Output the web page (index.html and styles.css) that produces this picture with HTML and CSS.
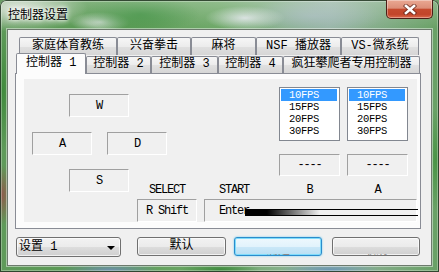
FILE: index.html
```html
<!DOCTYPE html>
<html lang="zh-CN">
<head>
    <meta charset="UTF-8">
    <meta name="viewport" content="width=device-width, initial-scale=1.0">
    <title>控制器设置</title>
    <link rel="stylesheet" href="styles.css">
</head>
<body>
    <div class="window">
        <div class="titlebar">
            <span class="title">控制器设置</span>
            <button class="close-btn" aria-label="关闭">
                <svg width="14" height="11" viewBox="0 0 14 11">
                    <path d="M3 2 L11 9 M11 2 L3 9" stroke="#5b2419" stroke-width="4.4" stroke-linecap="square" fill="none" opacity="0.7"/>
                    <path d="M3 2 L11 9 M11 2 L3 9" stroke="#fff" stroke-width="2.6" stroke-linecap="square" fill="none"/>
                </svg>
            </button>
        </div>

        <div class="client">
            <div class="tabctl">
                <div class="tabrow back">
                    <div class="tab" style="width: 98px">家庭体育教练</div>
                    <div class="tab" style="width: 74px">兴奋拳击</div>
                    <div class="tab" style="width: 65px">麻将</div>
                    <div class="tab" style="width: 85px">NSF 播放器</div>
                    <div class="tab" style="width: 78px">VS-微系统</div>
                </div>
                <div class="tabrow front">
                    <div class="tab active" style="width: 70px">控制器 1</div>
                    <div class="tab" style="width: 65px">控制器 2</div>
                    <div class="tab" style="width: 67px">控制器 3</div>
                    <div class="tab" style="width: 65px">控制器 4</div>
                    <div class="tab" style="width: 137px">疯狂攀爬者专用控制器</div>
                </div>

                <div class="panel">
                    <div class="page">
                        <div class="keypad">
                            <div class="field key-w">W</div>
                            <div class="keyrow">
                                <div class="field">A</div>
                                <div class="field">D</div>
                            </div>
                            <div class="field key-s">S</div>
                        </div>

                        <ul class="fps fps-1">
                            <li class="sel">10FPS</li>
                            <li>15FPS</li>
                            <li>20FPS</li>
                            <li>30FPS</li>
                        </ul>
                        <ul class="fps fps-2">
                            <li class="sel">10FPS</li>
                            <li>15FPS</li>
                            <li>20FPS</li>
                            <li>30FPS</li>
                        </ul>
                        <div class="field dash dash-1">----</div>
                        <div class="field dash dash-2">----</div>

                        <div class="label lbl-select">SELECT</div>
                        <div class="label lbl-start">START</div>
                        <div class="label lbl-b">B</div>
                        <div class="label lbl-a">A</div>

                        <div class="field bind bind-select">R Shift</div>
                        <div class="field bind bind-start"><span class="bind-text">Enter</span></div>
                    </div>
                </div>
            </div>

            <div class="buttons">
                <div class="combo">
                    <span>设置 1</span>
                    <span class="arrow"></span>
                </div>
                <button class="btn btn-reset">默认</button>
                <button class="btn btn-default"><span class="ghost">确定</span></button>
                <button class="btn btn-cancel"><span class="ghost">取消</span></button>
            </div>
        </div>
    </div>
</body>
</html>
```

FILE: styles.css
```css
* {
    box-sizing: border-box;
}

html, body {
    margin: 0;
    padding: 0;
    width: 439px;
    height: 272px;
    overflow: hidden;
    font-family: "Noto Sans CJK SC", sans-serif;
    font-size: 12px;
    color: #000;
    background: #6a9c66;
}

/* glass frame */
.window {
    width: 439px;
    height: 272px;
    display: flex;
    flex-direction: column;
    padding: 0 7px 6px 7px;
    border-radius: 6px 6px 0 0;
    background:
        linear-gradient(to bottom, rgba(255, 255, 255, 0.25), rgba(255, 255, 255, 0) 28px),
        radial-gradient(70px 24px at 18px 8px, #d4ddd0 0%, rgba(212, 221, 208, 0) 100%),
        radial-gradient(60px 18px at 140px 14px, #3f9040 0%, rgba(63, 144, 64, 0) 100%),
        radial-gradient(30px 10px at 100px 22px, #cfdcd2 0%, rgba(207, 220, 210, 0) 100%),
        radial-gradient(40px 12px at 245px 18px, #d6e0de 0%, rgba(214, 224, 222, 0) 100%),
        radial-gradient(70px 18px at 315px 16px, #9fb8b4 0%, rgba(159, 184, 180, 0) 100%),
        radial-gradient(14px 60px at 2px 90px, #3f8a3c 0%, rgba(63, 138, 60, 0) 100%),
        radial-gradient(12px 30px at 2px 195px, #8e5c4c 0%, rgba(142, 92, 76, 0) 100%),
        radial-gradient(12px 50px at 436px 160px, #4a9446 0%, rgba(74, 148, 70, 0) 100%),
        radial-gradient(50px 8px at 110px 270px, #6d8fa8 0%, rgba(109, 143, 168, 0) 100%),
        radial-gradient(40px 8px at 220px 270px, #3e8a3e 0%, rgba(62, 138, 62, 0) 100%),
        radial-gradient(50px 8px at 330px 270px, #6b96b0 0%, rgba(107, 150, 176, 0) 100%),
        linear-gradient(to right, #5f9a5a 0%, #5a9a54 20%, #6ea868 50%, #98b6a4 75%, #68a064 100%);
    box-shadow: inset 0 0 0 1px rgba(30, 50, 30, 0.85), inset 0 0 0 2px rgba(255, 255, 255, 0.3);
}

.titlebar {
    flex: none;
    height: 29px;
    display: flex;
    align-items: flex-start;
    justify-content: space-between;
}

.title {
    margin: 7px 0 0 1px;
    line-height: 14px;
    text-shadow: 0 0 5px #fff, 0 0 3px #fff, 0 0 8px rgba(255, 255, 255, 0.8);
}

.close-btn {
    width: 47px;
    height: 19px;
    margin-right: -1px;
    padding: 0;
    border: 1px solid #4c1e16;
    border-top: none;
    border-radius: 0 0 5px 5px;
    background: linear-gradient(#eaa893 0%, #dc8e78 45%, #c54a2e 52%, #c2452a 80%, #dc6a4c 100%);
    box-shadow: inset 0 0 0 1px rgba(255, 255, 255, 0.35);
    display: flex;
    align-items: center;
    justify-content: center;
}

.client {
    flex: 1;
    background: #f0f0f0;
    border: 1px solid #6d7a6d;
    box-shadow: 0 0 0 1px rgba(255, 255, 255, 0.45);
}

/* tab control */
.tabctl {
    width: 406px;
    margin: 7px 0 0 7px;
}

.tabrow {
    display: flex;
}

.tabrow.back {
    height: 18px;
    padding-left: 4px;
}

.tabrow.front {
    height: 20px;
    margin-top: -2px;
    padding-left: 1px;
    align-items: flex-start;
    position: relative;
    z-index: 1;
}

.tab {
    flex: none;
    height: 18px;
    border: 1px solid #898c95;
    border-bottom: none;
    border-radius: 2px 2px 0 0;
    background: linear-gradient(#f6f6f6 0%, #ececec 50%, #e0e0e0 51%, #d6d6d6 100%);
    font-family: "Liberation Mono", "Noto Sans CJK SC", monospace;
    line-height: 16px;
    text-align: center;
    white-space: nowrap;
}

.front .tab {
    height: 17px;
    margin-top: 3px;
    line-height: 15px;
}

.front .tab.active {
    height: 21px;
    margin-top: 0;
    line-height: 19px;
    background: #fcfcfc;
    text-align: left;
    padding-left: 9px;
}

.panel {
    height: 156px;
    border: 1px solid #898c95;
    background: #fcfcfc;
    padding: 5px 3px 6px 8px;
}

.page {
    height: 143px;
    background: #f0f0f0;
    display: grid;
    grid-template-columns: 113px 60px 7px 60px 15px 61px 7px 61px 9px;
    grid-template-rows: 8px 54px 13px 22px 23px 23px;
    font-family: "Liberation Mono", monospace;
    font-size: 12px;
    letter-spacing: -1.2px;
}

.field {
    border: 1px solid;
    border-color: #a0a0a0 #fff #fff #a0a0a0;
    display: flex;
    align-items: center;
    justify-content: center;
    white-space: nowrap;
}

.keypad {
    grid-column: 1 / 5;
    grid-row: 1 / 6;
    padding-top: 15px;
}

.keypad .field {
    width: 60px;
    height: 23px;
}

.key-w {
    margin-left: 45px;
}

.keyrow {
    display: flex;
    gap: 15px;
    margin: 15px 0 14px 8px;
}

.key-s {
    margin-left: 45px;
}

.fps {
    margin: 0;
    padding: 1px 2px 1px 1px;
    list-style: none;
    border: 1px solid #828790;
    background: #fff;
    grid-row: 2;
    font-size: 10.5px;
    letter-spacing: -0.3px;
}

.fps li {
    height: 12px;
    line-height: 12px;
    padding-left: 8px;
}

.fps li.sel {
    background: #3399ff;
    color: #fff;
}

.fps-1, .dash-1, .lbl-b {
    grid-column: 6;
}

.fps-2, .dash-2, .lbl-a {
    grid-column: 8;
}

.dash {
    grid-row: 4;
}

.label {
    grid-row: 5;
    align-self: end;
    margin-bottom: 3px;
    line-height: 12px;
    text-align: center;
}

.lbl-select, .bind-select {
    grid-column: 2;
}

.lbl-start {
    grid-column: 4;
}

.bind {
    grid-row: 6;
}

.bind-start {
    grid-column: 4 / 10;
    justify-content: flex-start;
    padding-left: 14px;
    position: relative;
}

/* leftover black streak painted across the START binding */
.bind-start::after {
    content: "";
    position: absolute;
    left: 40px;
    right: -2px;
    top: 9px;
    height: 5px;
    border-top: 1px solid #000;
    border-bottom: 1px solid #000;
    background: linear-gradient(to right, #000 0, #000 22px, rgba(0, 0, 0, 0) 75px);
}

/* bottom buttons */
.buttons {
    display: flex;
    align-items: flex-start;
    margin-top: 8px;
}

.combo, .btn {
    height: 19px;
    border: 1px solid #707070;
    border-radius: 3px;
    background: linear-gradient(#f2f2f2 0%, #ebebeb 50%, #dddddd 51%, #cfcfcf 100%);
    box-shadow: inset 0 0 0 1px rgba(255, 255, 255, 0.7);
    font-family: "Liberation Mono", "Noto Sans CJK SC", monospace;
    font-size: 12px;
    line-height: 17px;
    padding: 0;
}

.combo {
    width: 105px;
    height: 20px;
    margin-left: 8px;
    display: flex;
    justify-content: space-between;
    align-items: center;
    padding: 0 5px 0 2px;
}

.arrow {
    width: 0;
    height: 0;
    border-left: 4px solid transparent;
    border-right: 4px solid transparent;
    border-top: 4px solid #000;
    margin-top: 2px;
}

.btn-reset {
    width: 89px;
    margin-left: 16px;
}

.btn-default {
    width: 88px;
    margin-left: 8px;
    padding-top: 5px;
    border-color: #2a8ccc;
    background: linear-gradient(#eef8fd 0%, #e2f3fc 50%, #cbe8f8 51%, #b9dff3 100%);
    box-shadow: inset 0 0 0 1px #7fdcfb, 0 0 2px #5cc8f2;
}

.btn-cancel {
    width: 88px;
    margin-left: 10px;
    padding-top: 5px;
}

.ghost {
    color: #8a8a8a;
    clip-path: inset(72% 0 0 0);
}
```
